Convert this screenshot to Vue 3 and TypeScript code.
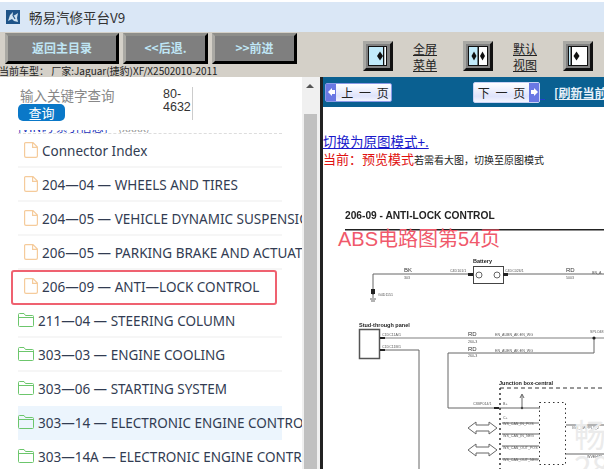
<template>
  <div class="app">
    <div class="titlebar">
      <svg class="logo" width="14" height="14" viewBox="0 0 14 14">
        <rect width="14" height="14" fill="#1f5488" />
        <path d="M2 11 L4 5 L7 2 L6.5 6 L9 5 L12 3 L11 8 L12 12 L8 11 L6 9 Z" fill="#cfe2f0" />
        <path d="M7 5.5 L9 9" stroke="#1f5488" stroke-width="1.1" />
      </svg>
      <span>畅易汽修平台V9</span>
    </div>

    <div class="toolbar">
      <div class="toolbar-left">
        <div class="nav-buttons">
          <button class="gray-btn wide">返回主目录</button>
          <button class="gray-btn">&lt;&lt;后退.</button>
          <button class="gray-btn">&gt;&gt;前进</button>
        </div>
        <div class="car-info">当前车型： 厂家:Jaguar(捷豹)XF/X2502010-2011</div>
      </div>
      <div class="view-tools">
        <svg class="view-icon" width="30" height="30" viewBox="0 0 30 30">
          <path d="M0 0H30L27 3H3V27L0 30Z" fill="#a8a8a4" />
          <path d="M30 0V30H0L3 27H27V3Z" fill="#111" />
          <rect x="3" y="3" width="24" height="24" fill="#808080" />
          <rect x="5.5" y="5.5" width="18" height="19" fill="#c2ebfb" stroke="#111" />
          <rect x="20" y="6" width="1.5" height="18" fill="#111" />
          <rect x="21.5" y="6" width="1.5" height="18" fill="#fff" />
          <path d="M14 15L17 10.5L20 15L17 19.5Z" fill="#111" />
        </svg>
        <a class="view-label">全屏<br />菜单</a>
        <svg class="view-icon" width="30" height="30" viewBox="0 0 30 30">
          <path d="M0 0H30L27 3H3V27L0 30Z" fill="#a8a8a4" />
          <path d="M30 0V30H0L3 27H27V3Z" fill="#111" />
          <rect x="3" y="3" width="24" height="24" fill="#808080" />
          <rect x="5.5" y="5.5" width="19" height="19" fill="#c2ebfb" stroke="#111" />
          <rect x="15" y="6" width="9" height="18" fill="#fff" />
          <rect x="14.5" y="6" width="1.5" height="18" fill="#111" />
          <path d="M8.5 15L11 10.5L13.5 15L11 19.5Z" fill="#111" />
          <path d="M17 15L19.5 10.5L22 15L19.5 19.5Z" fill="#111" />
        </svg>
        <a class="view-label">默认<br />视图</a>
        <svg class="view-icon" width="30" height="30" viewBox="0 0 30 30">
          <path d="M0 0H30L27 3H3V27L0 30Z" fill="#a8a8a4" />
          <path d="M30 0V30H0L3 27H27V3Z" fill="#111" />
          <rect x="3" y="3" width="24" height="24" fill="#808080" />
          <rect x="5.5" y="5.5" width="19" height="19" fill="#fff" stroke="#111" />
          <rect x="6" y="6" width="1.5" height="18" fill="#c2ebfb" />
          <rect x="7.5" y="6" width="1.5" height="18" fill="#111" />
          <path d="M10.5 15L13.5 10.5L16.5 15L13.5 19.5Z" fill="#111" />
        </svg>
      </div>
    </div>

    <div class="main">
      <div class="side">
        <div class="search">
          <div class="search-left">
            <div class="search-hint">输入关键字查询</div>
            <button class="search-btn">查询</button>
          </div>
          <div class="search-count">80-<br />4632</div>
        </div>
        <div class="cut-row"><span class="cut-link">[VIN码 索引信息]</span><span class="cut-note">(xxxx)</span></div>
        <div
          v-for="item in items"
          :key="item.text"
          class="row"
          :class="{ folder: item.folder, hover: item.hover, nosep: item.nosep }"
        >
          <svg v-if="item.folder" width="16" height="14" viewBox="0 0 16 14" fill="none" stroke="#6cc66c" stroke-width="1">
            <path d="M.5 3V1.5A1 1 0 0 1 1.5.5H6L7.5 2.5H14.5A1 1 0 0 1 15.5 3.5V12.5A1 1 0 0 1 14.5 13.5H1.5A1 1 0 0 1 .5 12.5ZM.5 4.5H15.5" />
          </svg>
          <svg v-else width="14" height="16" viewBox="0 0 14 16" fill="none" stroke="#f5cb9b" stroke-width="1.2">
            <path d="M1.6.6H9L13.4 5V14A1.4 1.4 0 0 1 12 15.4H2A1.4 1.4 0 0 1 .6 14V1.6A1 1 0 0 1 1.6.6ZM8.6.8V5.4H13.2" />
          </svg>
          <span class="row-text">{{ item.text }}</span>
          <div v-if="item.marked" class="mark"></div>
        </div>
      </div>

      <div class="scrollbar">
        <div class="scroll-arrow"></div>
        <div class="scroll-thumb"></div>
      </div>

      <div class="page">
        <div class="page-bar">
          <button class="page-btn prev">
            <i class="page-arrow">
              <svg width="9" height="10" viewBox="0 0 9 10"><path d="M1 5L5 1V3H8V7H5V9Z" fill="#fff" /></svg>
            </i>
            <span>上 一 页</span>
          </button>
          <button class="page-btn next">
            <span>下 一 页</span>
            <i class="page-arrow">
              <svg width="9" height="10" viewBox="0 0 9 10"><path d="M8 5L4 1V3H1V7H4V9Z" fill="#fff" /></svg>
            </i>
          </button>
          <span class="page-dash"></span>
          <a class="refresh">[刷新当前页面]</a>
        </div>

        <div class="page-body">
          <a class="switch-link">切换为原图模式+.</a>
          <div class="mode-line">当前：预览模式<small>若需看大图，切换至原图模式</small></div>

          <svg class="diagram" width="281" height="269" viewBox="323 200 281 269">
            <g class="sheet">
              <text x="345" y="218" class="sheet-title">206-09 - ANTI-LOCK CONTROL</text>
              <rect x="345" y="228" width="259" height="1.5" fill="#222" />

              <g fill="none" stroke="#666" stroke-width="1">
                <path d="M473 273H373V297M370 298H376M371 300H375M372 293H374" />
                <path d="M503 273H604" />
                <rect x="473.5" y="265.5" width="30" height="17" stroke="#444" />
                <circle cx="479" cy="274" r="3" />
                <circle cx="497" cy="274" r="3" />
                <rect x="359.5" y="328.5" width="20" height="29" stroke="#555" stroke-width="1.5" />
                <path d="M380 337H604" stroke="#aaa" stroke-width="1.5" />
                <path d="M380 349H419V469" />
                <path d="M594 337V352H448V407H540" />
                <path d="M522 407V394M520 397L522 393L524 397" />
                <path d="M566 424H604M566 453H604" stroke="#999" stroke-width="1.5" />
                <path d="M502 422H539M502 433H539M502 445H539M502 458H539" />
                <path d="M468 427L476 421V424H489V421L497 427L489 433V430H476V433Z" />
                <path d="M468 449L476 443V446H489V443L497 449L489 455V452H476V455Z" />
                <path d="M500 387H604" stroke="#333" stroke-dasharray="4 3" />
                <path d="M500 387V469" stroke="#333" stroke-dasharray="2 3" stroke-width="1.5" />
                <rect x="539.5" y="401.5" width="26" height="62" stroke="#333" stroke-dasharray="1.5 3" />
              </g>
              <circle cx="594" cy="337" r="1.6" fill="#222" />
              <circle cx="522" cy="407" r="1.2" fill="#444" />
              <path d="M468 272H473V275H468ZM503 272H508V275H503ZM371 288H375V293H371ZM380 336H385V338H380ZM380 348H385V350H380ZM494 406H499V408H494Z" fill="#222" />

              <g class="tiny">
                <text x="473" y="262" class="label-bold">Battery</text>
                <text x="404" y="271" class="label">BK</text>
                <text x="404" y="278">303</text>
                <text x="450" y="271">C4D101/1</text>
                <text x="505" y="271">C4DC026/1</text>
                <text x="566" y="271" class="label">RD</text>
                <text x="566" y="278">5003</text>
                <text x="592" y="273">BN_A</text>
                <text x="378" y="295">G4D1151</text>
                <text x="359" y="326" class="label-bold">Stud-through panel</text>
                <text x="382" y="335">C1DC11A/1</text>
                <text x="382" y="347">C1DC11B/1</text>
                <text x="468" y="335" class="label">RD</text>
                <text x="468" y="350" class="label">RD</text>
                <text x="468" y="342">260-3</text>
                <text x="468" y="356">260-3</text>
                <text x="495" y="335">EN_AUBN_AK:EN_WG</text>
                <text x="495" y="351">EN_AUEN_AK:EN_WG</text>
                <text x="590" y="332">SPLO48</text>
                <text x="499" y="384" class="label-bold">Junction box-central</text>
                <text x="473" y="404">C3BP014/1</text>
                <text x="503" y="404">B+</text>
                <text x="503" y="418">C+</text>
                <text x="503" y="424">WS_CAN_IN_POS</text>
                <text x="503" y="436">WS_CAN_IN_NEG</text>
                <text x="503" y="448">WS_CAN_OUT_POS</text>
                <text x="503" y="460">WS_CAN_OUT_NEG</text>
                <text x="572" y="428">IGN_SWPPLY_2</text>
                <text x="587" y="457">WVEHWL</text>
              </g>
            </g>
            <text x="338" y="245" class="abs-note">ABS电路图第54页</text>
            <text x="574" y="446" class="watermark">畅</text>
            <text x="574" y="478" class="watermark">28</text>
          </svg>
        </div>
      </div>
    </div>
  </div>
</template>

<script setup lang="ts">
interface Item {
  text: string;
  folder?: boolean;
  hover?: boolean;
  marked?: boolean;
  nosep?: boolean;
}

const items: Item[] = [
  { text: 'Connector Index' },
  { text: '204—04 — WHEELS AND TIRES' },
  { text: '204—05 — VEHICLE DYNAMIC SUSPENSION' },
  { text: '206—05 — PARKING BRAKE AND ACTUATION' },
  { text: '206—09 — ANTI—LOCK CONTROL', marked: true, nosep: true },
  { text: '211—04 — STEERING COLUMN', folder: true },
  { text: '303—03 — ENGINE COOLING', folder: true },
  { text: '303—06 — STARTING SYSTEM', folder: true, nosep: true },
  { text: '303—14 — ELECTRONIC ENGINE CONTROLS', folder: true, hover: true },
  { text: '303—14A — ELECTRONIC ENGINE CONTROLS', folder: true },
];
</script>

<style>
html,
body {
  margin: 0;
  background: #fff;
}
</style>

<style scoped>
.app {
  width: 604px;
  height: 469px;
  padding-top: 2px;
  box-sizing: border-box;
  overflow: hidden;
  display: flex;
  flex-direction: column;
  background: #fff;
  font-family: "Noto Sans CJK SC", "Noto Sans", sans-serif;
  color: #111;
}
.titlebar {
  height: 30px;
  flex: none;
  display: flex;
  align-items: center;
  gap: 9px;
  padding-left: 6px;
  background: #dae7f6;
  font-size: 13.5px;
  color: #333;
}
.toolbar {
  height: 45px;
  flex: none;
  display: flex;
  overflow: hidden;
  background: #d4d0c8;
}
.toolbar-left {
  width: 363px;
  flex: none;
}
.nav-buttons {
  display: flex;
  gap: 4px;
  padding: 1px 0 0 5px;
}
.gray-btn {
  width: 85px;
  height: 31px;
  padding: 0 0 2px;
  box-sizing: border-box;
  border: 3px solid;
  border-color: #8e8e8a #000 #000 #aaa9a4;
  background: #7f7f7f;
  color: #bfe6f5;
  font: bold 12px "Noto Sans CJK SC", sans-serif;
}
.gray-btn.wide {
  width: 114px;
}
.car-info {
  margin: 1px 0 0 -1px;
  font-size: 10px;
  line-height: 12px;
  white-space: nowrap;
  color: #222;
}
.view-tools {
  display: flex;
  align-items: flex-start;
  padding-top: 9px;
}
.view-icon {
  flex: none;
}
.view-label {
  width: 24px;
  margin: 0 26px 0 20px;
  font-size: 12px;
  line-height: 16px;
  text-decoration: underline;
  color: #222;
}
.main {
  flex: 1;
  min-height: 0;
  display: flex;
}
.side {
  width: 302px;
  flex: none;
  overflow: hidden;
  background: #fff;
}
.search {
  height: 53px;
  display: flex;
  box-sizing: border-box;
  padding: 10px 0 0 18px;
}
.search-left {
  width: 145px;
  margin-top: -1px;
}
.search-hint {
  padding-left: 2px;
  font-size: 13.5px;
  line-height: 18px;
  color: #888;
}
.search-btn {
  display: block;
  width: 47px;
  height: 17px;
  padding: 0;
  border: 0;
  border-radius: 5px;
  background: #0a78c8;
  color: #fff;
  font: 13px/17px "Noto Sans CJK SC", sans-serif;
}
.search-count {
  width: 30px;
  height: 33px;
  box-sizing: border-box;
  padding-top: 1px;
  font: 12.5px/13px "Liberation Sans", sans-serif;
  color: #333;
  border-right: 1px solid #ccc;
}
.cut-row {
  height: 3px;
  margin-left: 18px;
  width: 264px;
  display: flex;
  align-items: flex-end;
  gap: 10px;
  overflow: hidden;
  border-bottom: 1px dashed #ddd;
  font-size: 12px;
  line-height: 12px;
  white-space: nowrap;
}
.cut-link {
  color: #2233bb;
}
.cut-note {
  color: #999;
}
.row {
  position: relative;
  height: 34px;
  width: 264px;
  margin-left: 18px;
  box-sizing: border-box;
  display: flex;
  align-items: center;
  gap: 4px;
  padding-left: 6px;
  white-space: nowrap;
  font: 13.5px "Noto Sans", "Noto Sans CJK SC", sans-serif;
  color: #323c52;
  border-bottom: 2px solid #f6f6f6;
}
.row svg {
  flex: none;
}
.row-text {
  padding-top: 2px;
}
.row.folder {
  padding-left: 0;
}
.row.nosep {
  border-bottom-color: transparent;
}
.row.hover {
  background: #ecf5fd;
  border-bottom-color: transparent;
}
.mark {
  position: absolute;
  left: -7px;
  top: 0;
  width: 266px;
  height: 35px;
  box-sizing: border-box;
  border: 2.5px solid #ef6170;
  border-radius: 3px;
}
.scrollbar {
  width: 18px;
  flex: none;
  background: #f0f0f0;
  display: flex;
  flex-direction: column;
  align-items: center;
  box-sizing: border-box;
  padding-right: 2px;
}
.scroll-arrow {
  margin-top: 7px;
  width: 0;
  height: 0;
  border: 4px solid transparent;
  border-top: 0;
  border-bottom: 4px solid #555;
}
.scroll-thumb {
  width: 13px;
  flex: 1;
  margin-top: 26px;
  background: #c0c0c0;
}
.page {
  flex: 1;
  min-width: 0;
  overflow: hidden;
  border-left: 3px solid #222;
  background: #fff;
}
.page-bar {
  position: relative;
  height: 30px;
  display: flex;
  align-items: center;
  background: #0a6091;
  white-space: nowrap;
}
.page-btn {
  flex: none;
  width: 67px;
  height: 19px;
  margin-left: 2px;
  padding: 0;
  box-sizing: border-box;
  display: flex;
  align-items: center;
  justify-content: space-between;
  border: 1px solid #8b9ae6;
  border-radius: 2px;
  background: linear-gradient(#fff, #dfe3fb 70%, #f4f5fe);
  color: #222;
  font: 12px "Noto Sans CJK SC", sans-serif;
  word-spacing: 3px;
}
.page-btn span {
  flex: 1;
  text-align: center;
}
.page-btn.prev span {
  padding-left: 3px;
}
.page-btn.next {
  margin-left: 81px;
  height: 21px;
  border-color: #c8d2f4;
}
.page-arrow {
  width: 10px;
  height: 100%;
  display: flex;
  align-items: center;
  justify-content: center;
  background: #6a78e4;
}
.page-dash {
  flex: none;
  width: 5px;
  height: 15px;
  border-bottom: 1px solid #2040d0;
}
.refresh {
  flex: none;
  margin-left: 9px;
  font: bold 12px "Noto Sans CJK SC", sans-serif;
  color: #e8f2fa;
  text-decoration: underline;
}
.page-body {
  padding-top: 25px;
}
.switch-link {
  display: block;
  font-size: 13.5px;
  line-height: 18px;
  color: #1a1acc;
  text-decoration: underline;
}
.mode-line {
  font-size: 13px;
  line-height: 18px;
  color: #e01010;
  white-space: nowrap;
}
.mode-line small {
  font-size: 10px;
  color: #222;
}
.diagram {
  display: block;
  margin-top: 32px;
}
.sheet {
  filter: blur(0.5px);
}
.sheet-title {
  font: bold 10.2px "Liberation Sans", sans-serif;
  fill: #222;
}
.tiny text {
  font: 3.6px "Liberation Sans", sans-serif;
  fill: #555;
}
.tiny text.label {
  font-size: 6px;
  fill: #333;
}
.tiny text.label-bold {
  font-size: 5.5px;
  font-weight: bold;
  fill: #222;
}
.abs-note {
  font: 20px "Liberation Sans", "Noto Sans CJK SC", sans-serif;
  fill: #f0596b;
}
.watermark {
  font: 32px "Noto Sans CJK SC", sans-serif;
  fill: #ebebeb;
}
</style>
